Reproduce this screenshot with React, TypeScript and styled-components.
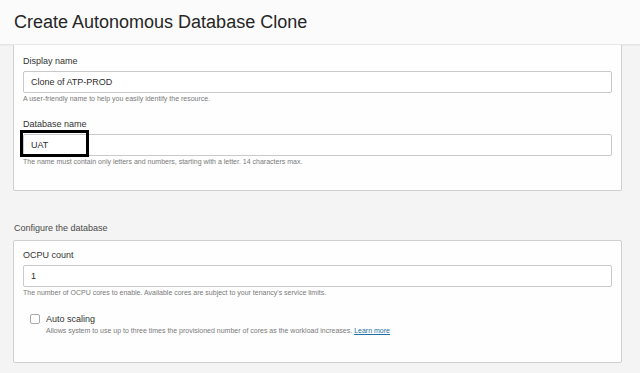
import React from "react";
import styled, { createGlobalStyle } from "styled-components";

const Global = createGlobalStyle`
  html, body { margin: 0; padding: 0; }
  body {
    background: #f4f4f4;
    font-family: "Liberation Sans", Arial, sans-serif;
    color: #333;
    overflow: hidden;
  }
`;

const Page = styled.div`
  width: 640px;
  height: 373px;
  display: flex;
  flex-direction: column;
  background: #f4f4f4;
`;

const Header = styled.header`
  height: 44px;
  flex: 0 0 44px;
  display: flex;
  align-items: center;
  padding-left: 14px;
  background: #fbfbfb;
  border-bottom: 1px solid #e6e6e6;
  box-shadow: 0 1px 1px rgba(0, 0, 0, 0.03);
`;

const Title = styled.h1`
  margin: 0;
  font-size: 18px;
  font-weight: 400;
  color: #262626;
  letter-spacing: 0;
`;

const Content = styled.main`
  display: flex;
  flex-direction: column;
  padding: 0 18px 0 13px;
`;

const Panel = styled.section<{ $cutTop?: boolean }>`
  background: #fefefe;
  border: 1px solid #cfcfcf;
  border-top: ${(p) => (p.$cutTop ? "none" : "1px solid #cfcfcf")};
  border-radius: ${(p) => (p.$cutTop ? "0 0 2px 2px" : "2px")};
  padding: ${(p) => (p.$cutTop ? "10px 9px 23px 9px" : "8px 9px 26px 9px")};
  display: flex;
  flex-direction: column;
`;

const SectionTitle = styled.h2`
  margin: 31px 0 6px 1px;
  font-size: 9px;
  line-height: 12px;
  font-weight: 400;
  color: #4a4a4a;
`;

const Field = styled.div<{ $gapTop?: number }>`
  display: flex;
  flex-direction: column;
  margin-top: ${(p) => p.$gapTop ?? 0}px;
`;

const Label = styled.label`
  font-size: 9px;
  line-height: 12px;
  color: #333;
  margin-bottom: 4px;
`;

const InputWrap = styled.div`
  position: relative;
  display: flex;
`;

const TextInput = styled.div`
  flex: 1;
  height: 20px;
  border: 1px solid #c9c9c9;
  border-radius: 2px;
  background: #fff;
  padding: 0 7px;
  display: flex;
  align-items: center;
  font-size: 9px;
  color: #2e2e2e;
`;

const Highlight = styled.div`
  position: absolute;
  left: -3px;
  top: -4px;
  width: 63px;
  height: 21px;
  border: 3px solid #000;
  pointer-events: none;
`;

const Help = styled.div`
  font-size: 7px;
  line-height: 10px;
  color: #7a7a7a;
  margin-top: 1px;
`;

const CheckRow = styled.div`
  display: flex;
  align-items: flex-start;
  gap: 6px;
  margin: 15px 0 0 7px;
`;

const Box = styled.span`
  width: 8px;
  height: 8px;
  margin-top: 1px;
  border: 1px solid #a9a9a9;
  border-radius: 2px;
  background: #fff;
  flex: 0 0 auto;
`;

const CheckText = styled.div`
  display: flex;
  flex-direction: column;
`;

const CheckLabel = styled.span`
  font-size: 9px;
  line-height: 12px;
  color: #333;
`;

const Link = styled.a`
  color: #1d6fa5;
  text-decoration: underline;
`;

export default function App() {
  return (
    <>
      <Global />
      <Page>
        <Header>
          <Title>Create Autonomous Database Clone</Title>
        </Header>
        <Content>
          <Panel $cutTop>
            <Field>
              <Label>Display name</Label>
              <InputWrap>
                <TextInput>Clone of ATP-PROD</TextInput>
              </InputWrap>
              <Help>A user-friendly name to help you easily identify the resource.</Help>
            </Field>
            <Field $gapTop={14}>
              <Label>Database name</Label>
              <InputWrap>
                <TextInput>UAT</TextInput>
                <Highlight />
              </InputWrap>
              <Help>
                The name must contain only letters and numbers, starting with a letter. 14 characters max.
              </Help>
            </Field>
          </Panel>
          <SectionTitle>Configure the database</SectionTitle>
          <Panel>
            <Field>
              <Label>OCPU count</Label>
              <InputWrap>
                <TextInput>1</TextInput>
              </InputWrap>
              <Help>
                The number of OCPU cores to enable. Available cores are subject to your tenancy's service limits.
              </Help>
            </Field>
            <CheckRow>
              <Box />
              <CheckText>
                <CheckLabel>Auto scaling</CheckLabel>
                <Help>
                  Allows system to use up to three times the provisioned number of cores as the workload increases.{" "}
                  <Link>Learn more</Link>
                </Help>
              </CheckText>
            </CheckRow>
          </Panel>
        </Content>
      </Page>
    </>
  );
}
